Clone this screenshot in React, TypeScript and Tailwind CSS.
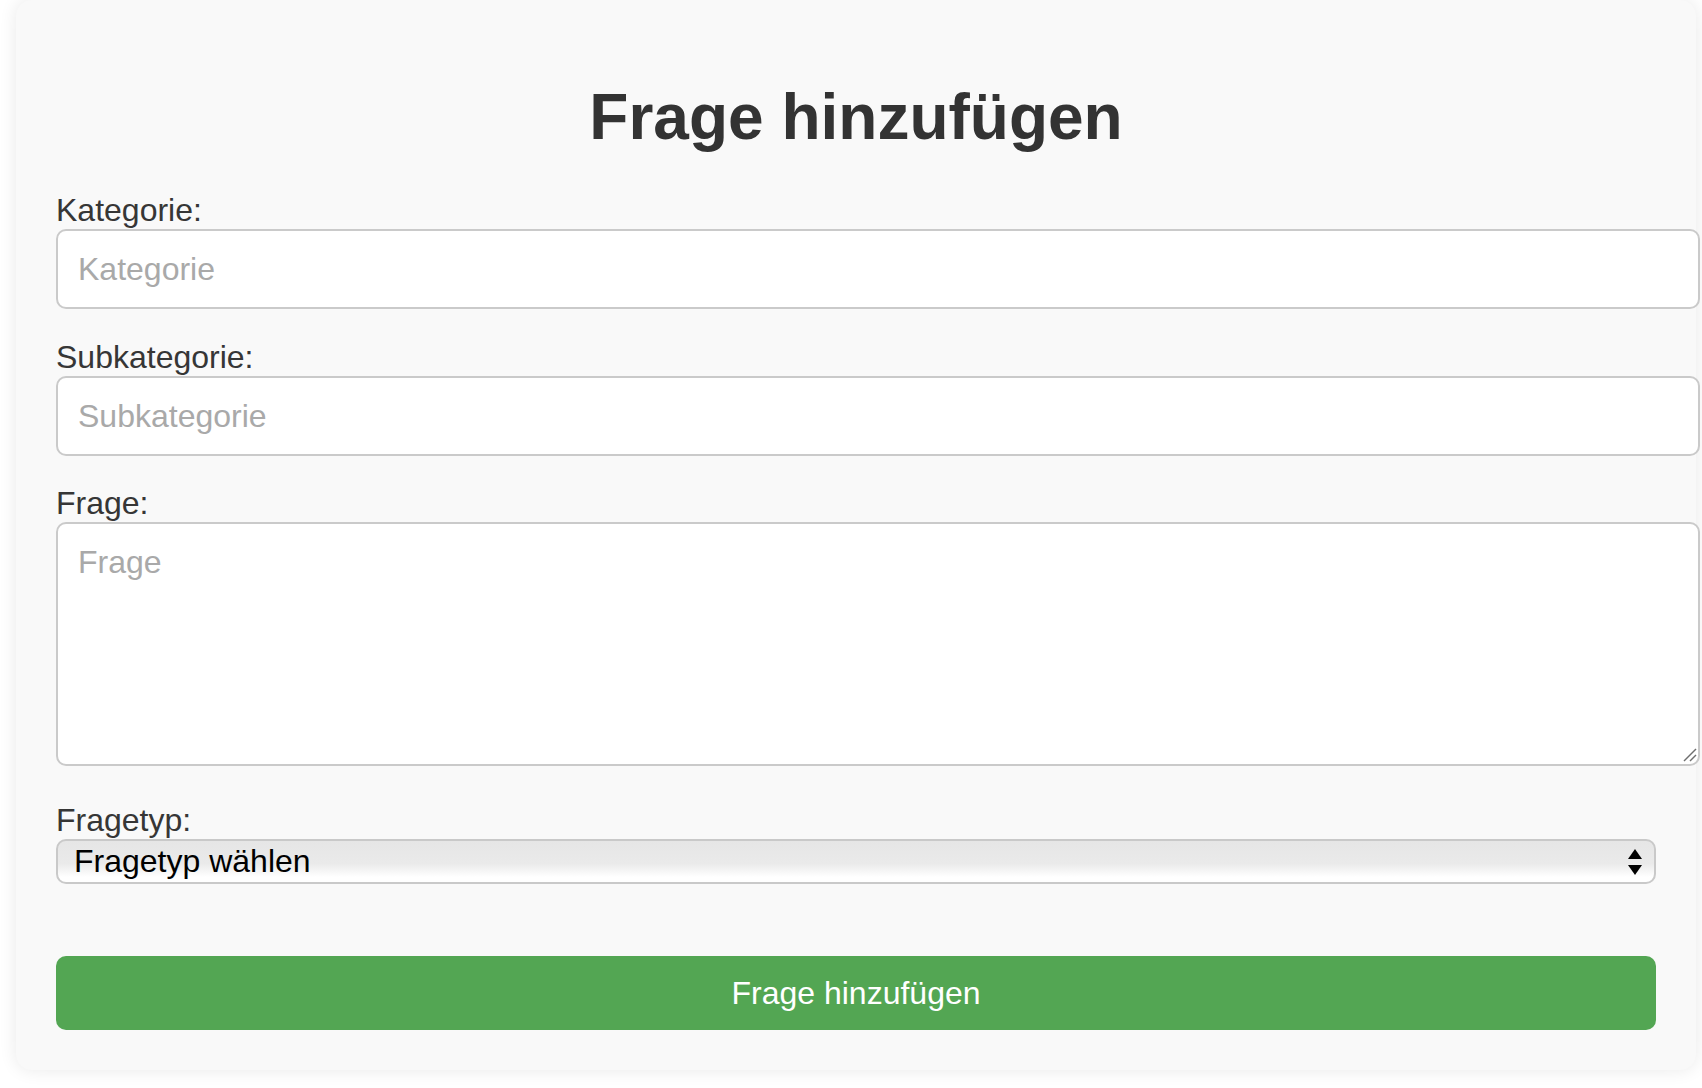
export default function App() {
  const labelCls = "block text-[32px] leading-[37px] text-[#363636]";
  const fieldCls =
    "box-content block w-full px-[20px] py-[20px] border-2 border-[#cacaca] rounded-[10px] bg-white text-[32px] leading-[36px] text-[#333] placeholder:text-[#a9a9a9] outline-none";

  return (
    <div className="min-h-screen bg-white font-['Liberation_Sans',Arial,sans-serif]">
      <div className="ml-[16px] w-[1680px] rounded-[16px] bg-[#f9f9f9] px-[40px] pt-[40px] pb-[40px] shadow-[0_0_18px_rgba(0,0,0,0.09)]">
        <h1 className="mt-[40px] mb-[38px] text-center text-[64px] font-bold leading-[74px] text-[#333]">
          Frage hinzufügen
        </h1>

        <form onSubmit={(e) => e.preventDefault()}>
          <label className={labelCls}>Kategorie:</label>
          <input className={`${fieldCls} h-[36px] mb-[30px]`} placeholder="Kategorie" />

          <label className={labelCls}>Subkategorie:</label>
          <input className={`${fieldCls} h-[36px] mb-[29px]`} placeholder="Subkategorie" />

          <label className={labelCls}>Frage:</label>
          <div className="relative mb-[36px]">
            <textarea className={`${fieldCls} h-[200px] resize-none`} placeholder="Frage" />
            {/* resize grip */}
            <svg
              className="pointer-events-none absolute right-[-41px] bottom-[4px]"
              width="14"
              height="14"
              viewBox="0 0 14 14"
            >
              <path d="M13 1 L1 13" stroke="#6e6e6e" strokeWidth="1.5" />
              <path d="M13 7 L7 13" stroke="#6e6e6e" strokeWidth="1.5" />
            </svg>
          </div>

          <label className={labelCls}>Fragetyp:</label>
          <div className="relative">
            <select
              className="block w-full h-[45px] appearance-none rounded-[10px] border-2 border-[#c9c9c9] bg-[linear-gradient(to_bottom,#e6e6e6_0%,#eaeaea_55%,#ffffff_88%)] pl-[16px] pr-[50px] text-[32px] leading-[37px] text-black outline-none"
              defaultValue=""
            >
              <option value="">Fragetyp wählen</option>
              <option value="single">Single Choice</option>
              <option value="multi">Multiple Choice</option>
              <option value="text">Freitext</option>
            </select>
            <svg
              className="pointer-events-none absolute right-[14px] top-[10px]"
              width="14"
              height="26"
              viewBox="0 0 14 26"
            >
              <path d="M7 0 L14 10 L0 10 Z" fill="#000" />
              <path d="M0 16 L14 16 L7 26 Z" fill="#000" />
            </svg>
          </div>

          <button
            type="submit"
            className="mt-[72px] block w-full h-[74px] rounded-[10px] bg-[#53a653] text-[32px] text-white"
          >
            Frage hinzufügen
          </button>
        </form>
      </div>
    </div>
  );
}
